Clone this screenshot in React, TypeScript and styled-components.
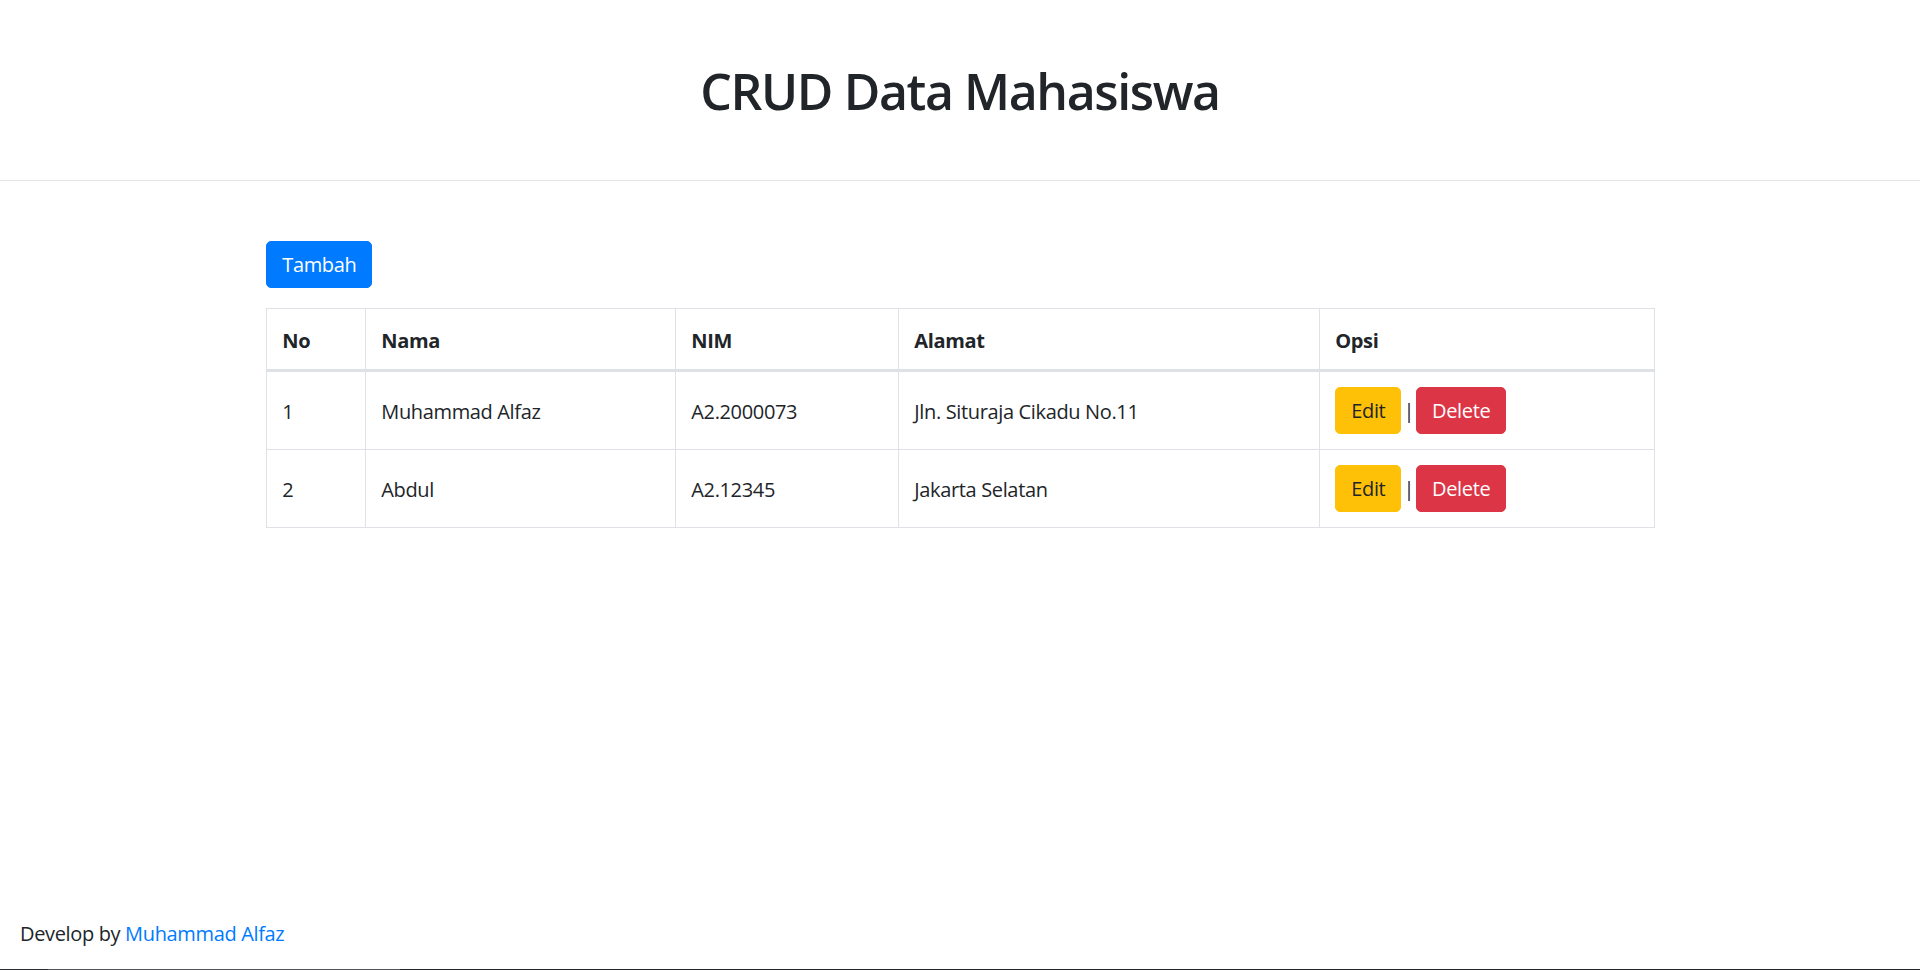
import React from "react";
import styled, { createGlobalStyle } from "styled-components";

const GlobalStyle = createGlobalStyle`
  html, body { margin: 0; padding: 0; }
  body {
    font-family: "Open Sans", "Noto Sans", "Liberation Sans", sans-serif;
    font-size: 20px;
    line-height: 30px;
    color: #212529;
    background: #fff;
    letter-spacing: -0.35px;
  }
  * { box-sizing: border-box; }
`;

const Page = styled.div`
  min-height: 970px;
  display: flex;
  flex-direction: column;
`;

const Header = styled.header`
  padding: 61px 0 59px;
  border-bottom: 1px solid #e5e5e5;
  text-align: center;
`;

const Title = styled.h1`
  margin: 0;
  font-size: 50px;
  line-height: 60px;
  font-weight: 600;
  letter-spacing: -1.4px;
`;

const Main = styled.main`
  flex: 1;
  width: 1425px;
  margin: 0 auto;
  padding: 60px 18.75px 0;
`;

const Button = styled.button<{ $variant: "primary" | "warning" | "danger" }>`
  font: inherit;
  letter-spacing: inherit;
  display: inline-block;
  padding: 7.5px 15px;
  line-height: 30px;
  border-radius: 5px;
  border: 1px solid
    ${(p) => (p.$variant === "primary" ? "#007bff" : p.$variant === "warning" ? "#ffc107" : "#dc3545")};
  background: ${(p) => (p.$variant === "primary" ? "#007bff" : p.$variant === "warning" ? "#ffc107" : "#dc3545")};
  color: ${(p) => (p.$variant === "warning" ? "#212529" : "#fff")};
  cursor: pointer;
  vertical-align: middle;
`;

const Table = styled.table`
  margin-top: 20px;
  width: 100%;
  border-collapse: collapse;
  table-layout: fixed;
  border: 1px solid #dee2e6;
`;

const Th = styled.th<{ $w: number }>`
  width: ${(p) => p.$w}px;
  text-align: left;
  font-weight: 700;
  padding: 17px 15px 13px;
  border: 1px solid #dee2e6;
  border-bottom: 3px solid #dee2e6;
  vertical-align: bottom;
`;

const Td = styled.td`
  padding: 15px;
  border: 1px solid #dee2e6;
  vertical-align: middle;
  white-space: nowrap;
`;

const Text = styled.span`
  position: relative;
  top: 1px;
`;

const Sep = styled.span`
  margin: 0 2px;
  vertical-align: middle;
`;

const Footer = styled.footer`
  padding: 0 20px 20px;
  line-height: 30px;
`;

const Link = styled.a`
  color: #007bff;
  text-decoration: none;
`;

const BottomLine = styled.div`
  height: 1px;
  background: linear-gradient(to right, #2b2f33 0 48px, #50545a 48px 400px, #23272b 400px);
`;

const rows = [
  { no: 1, nama: "Muhammad Alfaz", nim: "A2.2000073", alamat: "Jln. Situraja Cikadu No.11" },
  { no: 2, nama: "Abdul", nim: "A2.12345", alamat: "Jakarta Selatan" },
];

const cols = [
  { label: "No", w: 99 },
  { label: "Nama", w: 310 },
  { label: "NIM", w: 223 },
  { label: "Alamat", w: 421 },
  { label: "Opsi", w: 335 },
];

export default function App() {
  return (
    <Page>
      <GlobalStyle />
      <Header>
        <Title>CRUD Data Mahasiswa</Title>
      </Header>
      <Main>
        <Button $variant="primary">Tambah</Button>
        <Table>
          <thead>
            <tr>
              {cols.map((c) => (
                <Th key={c.label} $w={c.w}>
                  {c.label}
                </Th>
              ))}
            </tr>
          </thead>
          <tbody>
            {rows.map((r) => (
              <tr key={r.no}>
                <Td><Text>{r.no}</Text></Td>
                <Td><Text>{r.nama}</Text></Td>
                <Td><Text>{r.nim}</Text></Td>
                <Td><Text>{r.alamat}</Text></Td>
                <Td>
                  <Button $variant="warning">Edit</Button>
                  <Sep>|</Sep>
                  <Button $variant="danger">Delete</Button>
                </Td>
              </tr>
            ))}
          </tbody>
        </Table>
      </Main>
      <Footer>
        Develop by <Link href="#">Muhammad Alfaz</Link>
      </Footer>
      <BottomLine />
    </Page>
  );
}
